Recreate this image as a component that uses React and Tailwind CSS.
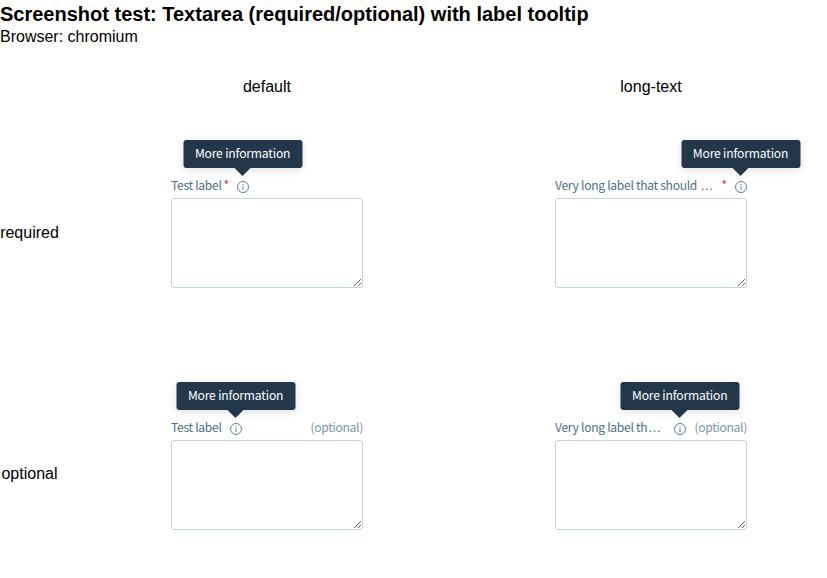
const ui = "font-['Noto_Sans_CJK_SC','Noto_Sans',sans-serif]";

function InfoIcon() {
  return (
    <svg viewBox="0 0 12 12" className="block size-3" fill="none" stroke="#4d6f87">
      <circle cx="6" cy="6" r="5.5" strokeWidth="0.9" />
      <path d="M6 5.2V9" strokeWidth="0.9" />
      <path d="M6 3.1V4.1" strokeWidth="1" />
    </svg>
  );
}

function Tooltip() {
  return (
    <div className="absolute bottom-[25px] left-1/2 flex h-7 w-[119px] -translate-x-1/2 items-center justify-center rounded-[3px] bg-[#23374a] shadow-[0_2px_8px_rgba(0,14,29,0.13)]">
      <span className="-mt-0.5 text-[12.1px] leading-5 tracking-[-0.17px] whitespace-nowrap text-white">More information</span>
      <svg viewBox="0 0 16 8" className="absolute top-full left-1/2 h-2 w-4 -translate-x-1/2" fill="#23374a">
        <path d="M0 0H16L8 8Z" />
      </svg>
    </div>
  );
}

function Field({ label, cut, required }) {
  return (
    <div className={`w-48 ${ui}`}>
      <div className="flex h-6 items-center pb-0.5 text-[12.1px] leading-6 tracking-[-0.3px] text-[#4d6f87]">
        <span className={cut ? "grow whitespace-pre" : "whitespace-pre"}>
          {label}
          {cut && <span className="ml-px font-['DejaVu_Sans'] text-[12.5px] leading-none tracking-normal">…</span>}
        </span>
        {required && <span className="ml-0.5 w-[5px] shrink-0 text-[#e61e27]">*</span>}
        <span className={`relative top-[2px] ml-2 size-3 shrink-0 ${cut && required ? "mr-[0.5px]" : ""}`}>
          <InfoIcon />
          <Tooltip />
        </span>
        {!required && <span className="ml-auto shrink-0 pl-[8.7px] text-[#7896ad]">(optional)</span>}
      </div>
      <textarea className="block h-[90px] w-48 resize rounded-[3px] border border-[#bed2e0] bg-white outline-none" />
    </div>
  );
}

function Row({ name, longLabel, required }) {
  return (
    <div className="grid h-[242px] grid-cols-[75px_384px_384px]">
      <div className={`flex w-[59px] items-center justify-center ${required ? "h-[229px]" : "h-[227px]"}`}>{name}</div>
      <div className="flex justify-center pt-[56px]">
        <Field label="Test label" required={required} />
      </div>
      <div className="flex justify-center pt-[56px]">
        <Field label={longLabel} cut required={required} />
      </div>
    </div>
  );
}

export default function App() {
  return (
    <main className="h-[578px] w-full overflow-hidden bg-white font-['Liberation_Sans',Arial,sans-serif] text-base leading-[18px] text-black">
      <h1 className="h-7 text-xl leading-7 font-bold">Screenshot test: Textarea (required/optional) with label tooltip</h1>
      <p>Browser: chromium</p>
      <div className="mt-8 grid h-10 grid-cols-[75px_384px_384px] text-center">
        <span />
        <span>default</span>
        <span>long-text</span>
      </div>
      <Row name="required" longLabel="Very long label that should " required />
      <Row name="optional" longLabel="Very long label th" />
    </main>
  );
}
